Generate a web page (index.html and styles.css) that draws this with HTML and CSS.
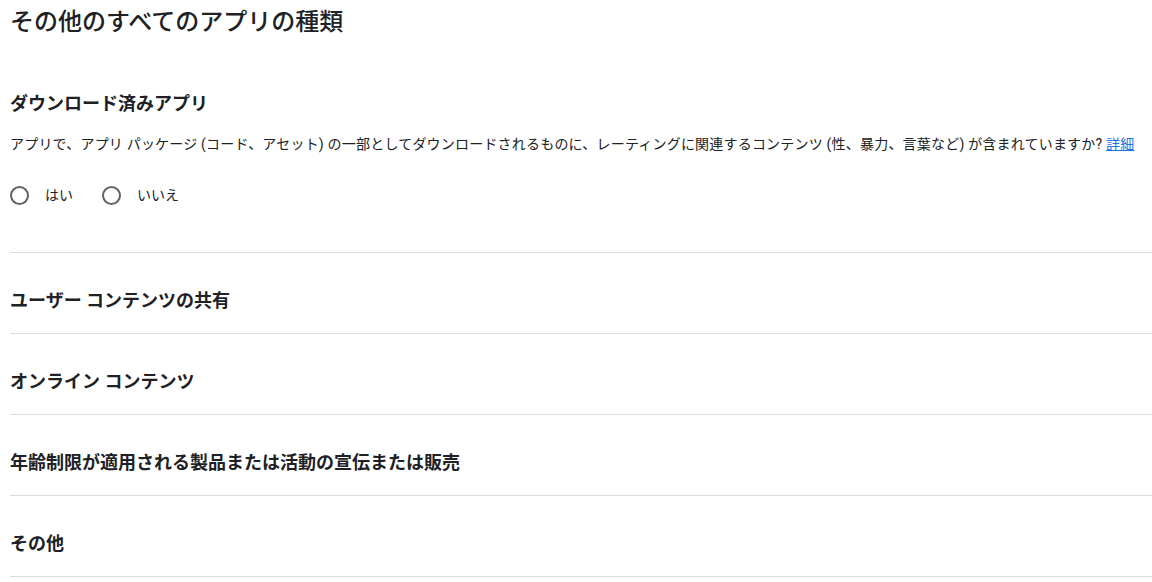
FILE: index.html
```html
<!DOCTYPE html>
<html lang="ja">
<head>
    <meta charset="UTF-8">
    <meta name="viewport" content="width=device-width, initial-scale=1.0">
    <title>その他のすべてのアプリの種類</title>
    <link rel="stylesheet" href="styles.css">
</head>
<body>
    <div class="page">
        <h1 class="page-title">その他のすべてのアプリの種類</h1>

        <section class="section section-open">
            <h2 class="section-title">ダウンロード済みアプリ</h2>
            <p class="question">アプリで、アプリ パッケージ (コード、アセット) の一部としてダウンロードされるものに、レーティングに関連するコンテンツ (性、暴力、言葉など) が含まれていますか? <a href="#" class="link">詳細</a></p>
            <div class="radio-group">
                <label class="radio"><input type="radio" name="downloaded"><span class="radio-mark"></span>はい</label>
                <label class="radio"><input type="radio" name="downloaded"><span class="radio-mark"></span>いいえ</label>
            </div>
        </section>

        <section class="section">
            <h2 class="section-title">ユーザー コンテンツの共有</h2>
        </section>

        <section class="section">
            <h2 class="section-title">オンライン コンテンツ</h2>
        </section>

        <section class="section">
            <h2 class="section-title">年齢制限が適用される製品または活動の宣伝または販売</h2>
        </section>

        <section class="section">
            <h2 class="section-title">その他</h2>
        </section>
    </div>
</body>
</html>
```

FILE: styles.css
```css
body {
    margin: 0;
    font-family: Roboto, "Noto Sans CJK JP", sans-serif;
    color: #202124;
    background: #fff;
}

.page {
    padding: 6px 0 0 10px;
}

.page-title {
    margin: 0;
    font-size: 24px;
    line-height: 32px;
    font-weight: 500;
}

.section {
    border-bottom: 1px solid #dadce0;
    padding: 36px 0 20px;
}

.section-open {
    padding: 54px 0 47px;
}

.section-title {
    margin: 0;
    font-size: 18px;
    line-height: 24px;
    font-weight: 700;
}

.question {
    margin: 18px 0 0;
    font-size: 14px;
    line-height: 20px;
    letter-spacing: 0.2px;
}

.link {
    color: #1a73e8;
}

.radio-group {
    display: flex;
    gap: 29px;
    margin-top: 31px;
}

.radio {
    display: flex;
    align-items: center;
    gap: 16px;
    font-size: 14px;
    line-height: 20px;
    cursor: pointer;
}

.radio input {
    display: none;
}

.radio-mark {
    width: 15px;
    height: 15px;
    border: 2px solid #5f6368;
    border-radius: 50%;
}
```
